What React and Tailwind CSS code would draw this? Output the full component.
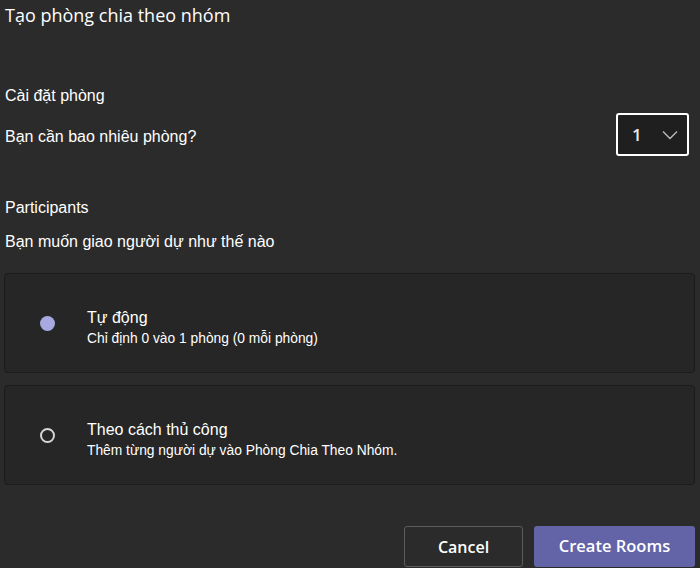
import React from "react";

const sans = { fontFamily: '"Liberation Sans", Arial, sans-serif' };

function Card({ selected, title, sub, className }) {
  return (
    <div
      className={
        "ml-[4px] mr-[5px] h-[100px] rounded-[4px] border border-[#1b1b1b] bg-[#262626] flex items-center " +
        className
      }
    >
      <div className="w-[82px] flex justify-center pl-[3px]">
        {selected ? (
          <div className="w-[15px] h-[15px] rounded-full bg-[#a9a9e1]" />
        ) : (
          <div className="w-[15px] h-[15px] rounded-full border-2 border-[#d6d6d6]" />
        )}
      </div>
      <div className="self-start pt-[34px] flex flex-col text-white">
        <div className="text-[16px] leading-[20px]">{title}</div>
        <div className="text-[13.8px] leading-[16px] mt-[3px]">{sub}</div>
      </div>
    </div>
  );
}

export default function App() {
  return (
    <div className="w-[700px] h-[568px] bg-[#2b2b2b] text-white overflow-hidden flex flex-col" style={sans}>
      <div
        className="pl-[5px] pt-[2px] text-[18px] leading-[26px]"
        style={{ fontFamily: '"Open Sans", "Noto Sans", sans-serif' }}
      >
        Tạo phòng chia theo nhóm
      </div>
      <div className="pl-[5px] mt-[58px] text-[16px] leading-[20px]">Cài đặt phòng</div>
      <div className="mt-[7px] pl-[5px] pr-[11px] flex items-center justify-between">
        <div className="text-[16px] leading-[20px] pt-[4px]">Bạn cần bao nhiêu phòng?</div>
        <div className="w-[73px] h-[43px] border-2 border-white rounded-[3px] bg-[#1f1f1f] flex items-center justify-between pl-[14px] pr-[9px]">
          <span className="text-[17px] font-semibold text-[#e6e6e6]" style={{ fontFamily: '"Open Sans", sans-serif' }}>1</span>
          <svg width="16" height="10" viewBox="0 0 16 10" fill="none">
            <path d="M1 1.5 L8 8.5 L15 1.5" stroke="#bdbdbd" strokeWidth="1.3" />
          </svg>
        </div>
      </div>
      <div className="pl-[5px] mt-[42px] text-[16px] leading-[20px]">Participants</div>
      <div className="pl-[5px] mt-[14px] text-[16px] leading-[20px]">Bạn muốn giao người dự như thế nào</div>
      <Card
        className="mt-[21px]"
        selected
        title="Tự động"
        sub="Chỉ định 0 vào 1 phòng (0 mỗi phòng)"
      />
      <Card
        className="mt-[12px]"
        title="Theo cách thủ công"
        sub="Thêm từng người dự vào Phòng Chia Theo Nhóm."
      />
      <div className="mt-[41px] flex justify-end gap-[11px] pr-[5px]" style={{ fontFamily: '"Open Sans", sans-serif' }}>
        <button className="w-[119px] h-[41px] border border-[#5c5c5c] rounded-[3px] text-[16px] font-semibold text-white">
          Cancel
        </button>
        <button className="w-[161px] h-[41px] rounded-[3px] bg-[#6264a7] text-[16.5px] font-semibold text-white">
          Create Rooms
        </button>
      </div>
    </div>
  );
}
